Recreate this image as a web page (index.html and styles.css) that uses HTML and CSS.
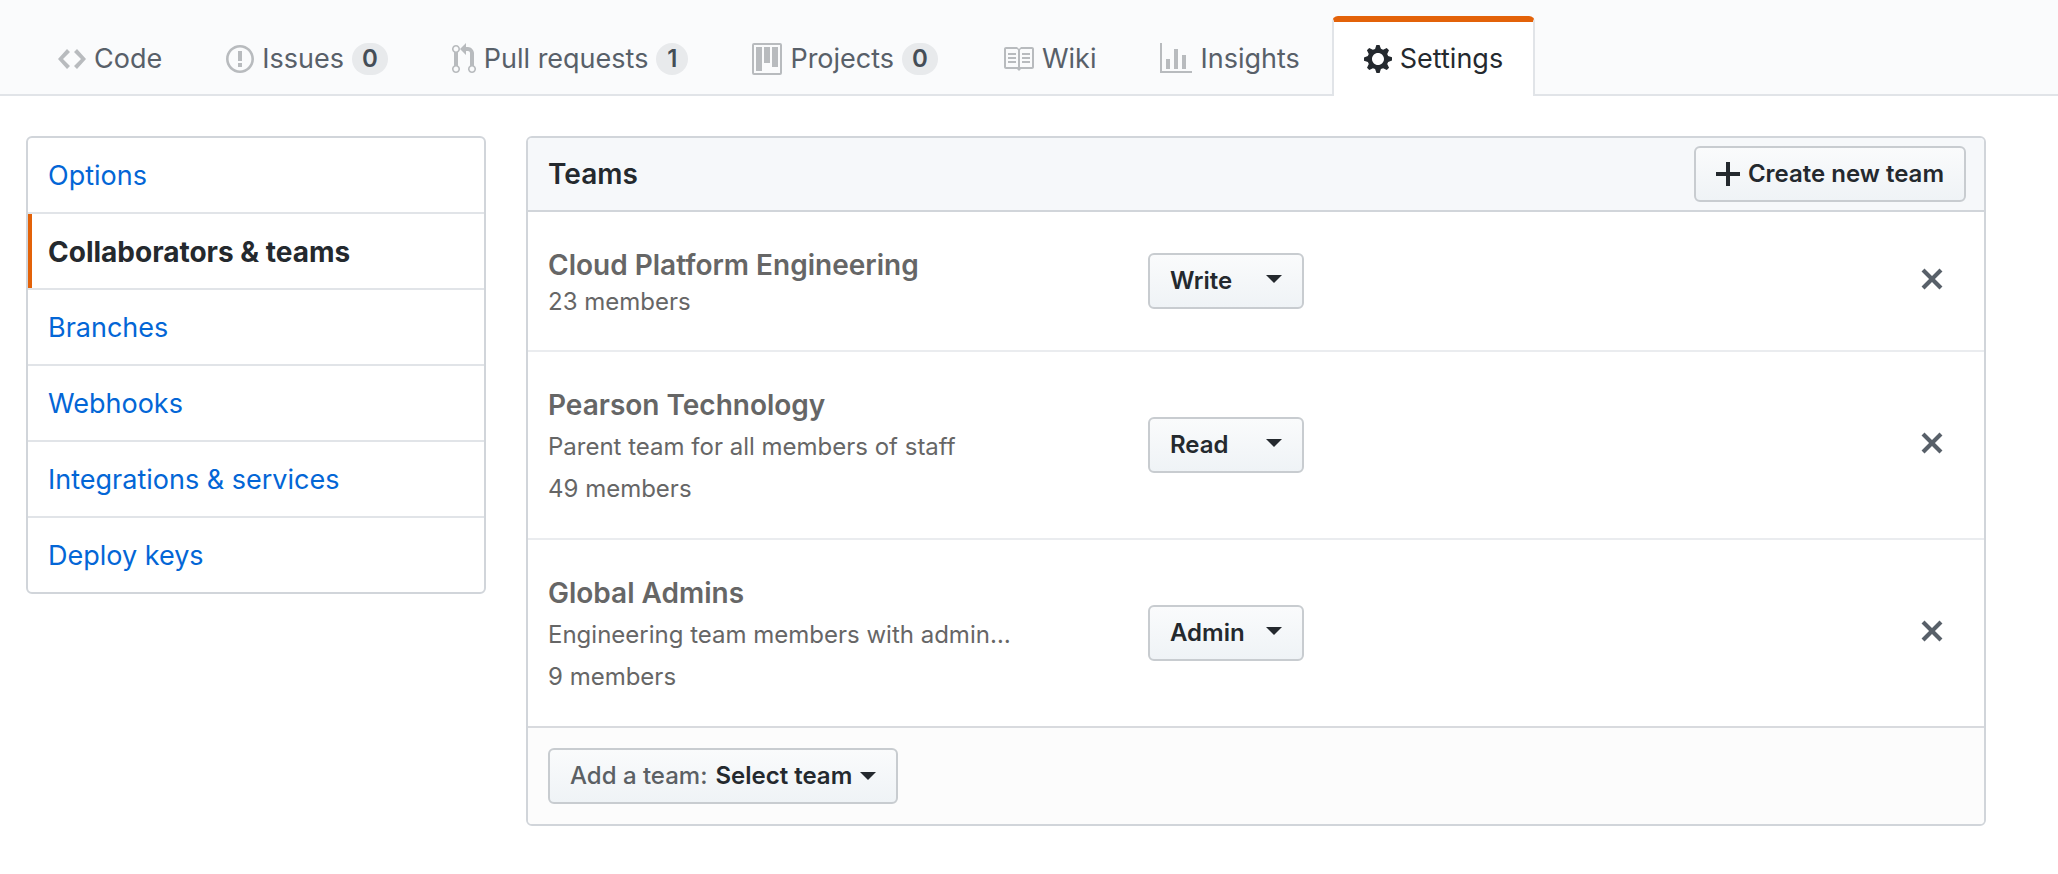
FILE: index.html
```html
<!DOCTYPE html>
<html lang="en">
<head>
<meta charset="utf-8">
<title>Collaborators &amp; teams</title>
<link rel="stylesheet" href="styles.css">
</head>
<body>
<header class="repo-head">
  <nav class="tabs" aria-label="Repository">
    <a class="tab" href="#code"><svg class="icon" width="28" height="32" viewBox="0 0 14 16"><path fill-rule="evenodd" d="M9.500 3L8 4.500 11.500 8 8 11.500 9.500 13 14 8 9.500 3zm-5 0L0 8l4.500 5L6 11.500 2.500 8 6 4.500 4.500 3z"/></svg><span>Code</span></a>
    <a class="tab" href="#issues"><svg class="icon" width="28" height="32" viewBox="0 0 14 16"><path fill-rule="evenodd" d="M7 2.300c3.140 0 5.700 2.560 5.700 5.700s-2.560 5.700-5.700 5.700A5.710 5.710 0 0 1 1.300 8c0-3.140 2.560-5.700 5.700-5.700zM7 1C3.140 1 0 4.140 0 8s3.140 7 7 7 7-3.140 7-7-3.140-7-7-7zm1 3H6v5h2V4zm0 6H6v2h2v-2z"/></svg><span>Issues</span><span class="count">0</span></a>
    <a class="tab" href="#pulls"><svg class="icon" width="24" height="32" viewBox="0 0 12 16"><path fill-rule="evenodd" d="M11 11.280V5c-.03-.78-.34-1.470-.94-2.060C9.460 2.350 8.780 2.030 8 2H7V0L4 3l3 3V4h1c.27.020.48.110.69.310.21.200.3.420.31.690v6.280A1.993 1.993 0 0 0 10 15a1.993 1.993 0 0 0 1-3.720zm-1 2.920c-.66 0-1.200-.55-1.200-1.200 0-.65.550-1.200 1.200-1.200.65 0 1.200.55 1.200 1.200 0 .65-.55 1.200-1.200 1.200zM4 3c0-1.110-.89-2-2-2a1.993 1.993 0 0 0-1 3.720v6.560A1.993 1.993 0 0 0 2 15a1.993 1.993 0 0 0 1-3.720V4.720c.59-.34 1-.98 1-1.720zm-.8 10c0 .66-.55 1.200-1.200 1.200-.65 0-1.200-.55-1.200-1.200 0-.65.550-1.200 1.200-1.200.65 0 1.200.55 1.200 1.200zM2 4.200C1.340 4.200.8 3.650.8 3c0-.65.550-1.200 1.200-1.200.65 0 1.200.55 1.200 1.200 0 .65-.55 1.200-1.200 1.200z"/></svg><span>Pull requests</span><span class="count">1</span></a>
    <a class="tab" href="#projects"><svg class="icon" width="30" height="32" viewBox="0 0 15 16"><path fill-rule="evenodd" d="M10 12h3V2h-3v10zm-4-2h3V2H6v8zm-4 4h3V2H2v12zm-1 1h13V1H1v14zM14 0H1a1 1 0 0 0-1 1v14a1 1 0 0 0 1 1h13a1 1 0 0 0 1-1V1a1 1 0 0 0-1-1z"/></svg><span>Projects</span><span class="count">0</span></a>
    <a class="tab" href="#wiki"><svg class="icon" width="32" height="32" viewBox="0 0 16 16"><path fill-rule="evenodd" d="M3 5h4v1H3V5zm0 3h4V7H3v1zm0 2h4V9H3v1zm11-5h-4v1h4V5zm0 2h-4v1h4V7zm0 2h-4v1h4V9zm2-6v9c0 .55-.45 1-1 1H9.500l-1 1-1-1H2c-.55 0-1-.45-1-1V3c0-.55.450-1 1-1h5.500l1 1 1-1H15c.55 0 1 .45 1 1zm-8 .5L7.500 3H2v9h6V3.500zm7-.5H9.500l-.5.500V12h6V3z"/></svg><span>Wiki</span></a>
    <a class="tab" href="#insights"><svg class="icon" width="32" height="32" viewBox="0 0 16 16"><path fill-rule="evenodd" d="M16 14v1H0V0h1v14h15zM5 13H3V8h2v5zm4 0H7V3h2v10zm4 0h-2V6h2v7z"/></svg><span>Insights</span></a>
    <a class="tab tab-active" href="#settings" aria-current="page"><svg class="icon" width="28" height="32" viewBox="0 0 14 16"><path fill-rule="evenodd" d="M14 8.770v-1.600l-1.940-.64-.45-1.090.88-1.840-1.130-1.130-1.810.91-1.090-.45-.69-1.920h-1.600l-.63 1.940-1.110.45-1.840-.88-1.130 1.130.91 1.810-.45 1.090L0 7.230v1.590l1.940.64.45 1.090-.88 1.840 1.130 1.130 1.810-.91 1.090.45.69 1.920h1.590l.63-1.940 1.110-.45 1.840.88 1.130-1.130-.92-1.810.47-1.090L14 8.750v.02zM7 11c-1.660 0-3-1.340-3-3s1.340-3 3-3 3 1.340 3 3-1.340 3-3 3z"/></svg><span>Settings</span></a>
  </nav>
</header>
<main class="layout">
  <nav class="menu" aria-label="Settings">
    <a class="menu-item" href="#options">Options</a>
    <a class="menu-item menu-item-active" href="#collaboration" aria-current="page">Collaborators &amp; teams</a>
    <a class="menu-item" href="#branches">Branches</a>
    <a class="menu-item" href="#hooks">Webhooks</a>
    <a class="menu-item" href="#integrations">Integrations &amp; services</a>
    <a class="menu-item" href="#keys">Deploy keys</a>
  </nav>
  <section class="panel" aria-labelledby="teams-title">
    <div class="panel-head">
      <h1 class="panel-title" id="teams-title">Teams</h1>
      <button class="btn" type="button"><svg class="plus" width="24" height="32" viewBox="0 0 12 16"><path d="M12 9H7v5H5V9H0V7h5V2h2v5h5z"/></svg>Create new team</button>
    </div>
    <ul class="teams">
      <li class="team">
        <div class="team-info">
          <h2 class="team-name">Cloud Platform Engineering</h2>
          <p class="team-text team-text-tight">23 members</p>
        </div>
        <div class="team-role">
          <select class="btn role" aria-label="Permission for Cloud Platform Engineering"><option>Admin</option><option selected>Write</option><option>Read</option></select>
          <svg class="caret role-caret" width="16" height="8" viewBox="0 0 16 8"><path d="M0 0h16L8 8z"/></svg>
        </div>
        <button class="remove" type="button" aria-label="Remove Cloud Platform Engineering"><svg width="24" height="32" viewBox="0 0 12 16"><path d="M7.480 8l3.750 3.750-1.480 1.480L6 9.480l-3.750 3.750-1.480-1.480L4.520 8 .77 4.250l1.480-1.480L6 6.520l3.750-3.750 1.480 1.480z"/></svg></button>
      </li>
      <li class="team">
        <div class="team-info">
          <h2 class="team-name">Pearson Technology</h2>
          <p class="team-text">Parent team for all members of staff</p>
          <p class="team-text">49 members</p>
        </div>
        <div class="team-role">
          <select class="btn role" aria-label="Permission for Pearson Technology"><option>Admin</option><option>Write</option><option selected>Read</option></select>
          <svg class="caret role-caret" width="16" height="8" viewBox="0 0 16 8"><path d="M0 0h16L8 8z"/></svg>
        </div>
        <button class="remove" type="button" aria-label="Remove Pearson Technology"><svg width="24" height="32" viewBox="0 0 12 16"><path d="M7.480 8l3.750 3.750-1.480 1.480L6 9.480l-3.750 3.750-1.480-1.480L4.520 8 .77 4.250l1.480-1.480L6 6.520l3.750-3.750 1.480 1.480z"/></svg></button>
      </li>
      <li class="team">
        <div class="team-info">
          <h2 class="team-name">Global Admins</h2>
          <p class="team-text">Engineering team members with admin…</p>
          <p class="team-text">9 members</p>
        </div>
        <div class="team-role">
          <select class="btn role" aria-label="Permission for Global Admins"><option selected>Admin</option><option>Write</option><option>Read</option></select>
          <svg class="caret role-caret" width="16" height="8" viewBox="0 0 16 8"><path d="M0 0h16L8 8z"/></svg>
        </div>
        <button class="remove" type="button" aria-label="Remove Global Admins"><svg width="24" height="32" viewBox="0 0 12 16"><path d="M7.480 8l3.750 3.750-1.480 1.480L6 9.480l-3.750 3.750-1.480-1.480L4.520 8 .77 4.250l1.480-1.480L6 6.520l3.750-3.750 1.480 1.480z"/></svg></button>
      </li>
    </ul>
    <div class="panel-foot">
      <button class="btn" type="button" aria-haspopup="menu"><span class="btn-label">Add a team:</span>Select team<svg class="caret" width="16" height="8" viewBox="0 0 16 8"><path d="M0 0h16L8 8z"/></svg></button>
    </div>
  </section>
</main>
</body>
</html>
```
FILE: styles.css
```css
* {
  box-sizing: border-box;
}

body {
  margin: 0;
  background: #fff;
  color: #24292e;
  font: 27px/42px Inter, "Liberation Sans", sans-serif;
}

h1, h2, p, ul {
  margin: 0;
  padding: 0;
}

a {
  text-decoration: none;
}

svg {
  display: block;
  flex: none;
  fill: currentColor;
}

.repo-head {
  padding: 16px 26px 0;
  background: #fafbfc;
  border-bottom: 2px solid #e1e4e8;
}

.tabs {
  display: flex;
  margin-bottom: -2px;
}

.tab {
  display: flex;
  align-items: center;
  gap: 8px;
  height: 80px;
  padding: 0 30px;
  border: 2px solid transparent;
  border-top: 6px solid transparent;
  border-bottom: 0;
  border-radius: 6px 6px 0 0;
  color: #586069;
  white-space: nowrap;
}

.tab .icon {
  color: #b8bbbe;
}

.tab-active {
  background: #fff;
  border-color: #e36209 #e1e4e8 transparent;
  color: #24292e;
}

.tab-active .icon {
  color: #24292e;
}

.count {
  min-width: 32px;
  padding: 0 10px;
  border-radius: 16px;
  background: #e8eaec;
  color: #444d56;
  font-size: 24px;
  font-weight: 600;
  line-height: 32px;
  text-align: center;
}

.layout {
  display: grid;
  grid-template-columns: 460px minmax(0, 1fr);
  align-items: start;
  gap: 40px;
  padding: 40px 72px 40px 26px;
}

.menu {
  overflow: hidden;
  border: 2px solid #d1d5da;
  border-radius: 6px;
}

.menu-item {
  display: block;
  padding: 17px 20px 15px;
  border-bottom: 2px solid #e1e4e8;
  color: #0366d6;
}

.menu-item:last-child {
  border-bottom: 0;
}

.menu-item-active {
  padding-left: 16px;
  background: linear-gradient(#e36209, #e36209) left / 4px 100% no-repeat;
  padding-left: 20px;
  color: #24292e;
  font-size: 28px;
  font-weight: 700;
}

.panel {
  overflow: hidden;
  border: 2px solid #d1d5da;
  border-radius: 6px;
}

.panel-head {
  display: flex;
  align-items: center;
  justify-content: space-between;
  padding: 8px 18px 8px 20px;
  background: #f6f8fa;
  border-bottom: 2px solid #d1d5da;
}

.panel-title,
.team-name {
  font-size: 28px;
  font-weight: 600;
  line-height: 42px;
}

.btn {
  display: flex;
  align-items: center;
  height: 56px;
  margin: 0;
  padding: 0 20px;
  border: 2px solid #c8ccd0;
  border-radius: 6px;
  background: linear-gradient(#fafbfc, #eff3f6);
  color: #24292e;
  font: 600 24px/36px Inter, "Liberation Sans", sans-serif;
  cursor: pointer;
}

.plus {
  margin-right: 8px;
}

.btn .caret {
  margin-left: 8px;
}

.btn-label {
  margin-right: 8px;
  color: #5b6064;
  font-weight: 500;
}

.teams {
  list-style: none;
}

.team {
  display: grid;
  grid-template-columns: 600px 1fr auto;
  align-items: center;
  padding: 28px 40px 28px 20px;
  border-bottom: 2px solid #eaecef;
}

.team:last-child {
  border-bottom-color: #d8dade;
}

.team-info {
  padding-top: 4px;
  color: #666;
}

.team-text {
  font-size: 24px;
  line-height: 42px;
}

.team-text-tight {
  margin-bottom: 4px;
  line-height: 32px;
}

.team-role {
  position: relative;
  width: 156px;
}

.role {
  width: 100%;
  appearance: none;
}

.role-caret {
  position: absolute;
  top: 22px;
  right: 22px;
  pointer-events: none;
}

.remove {
  margin-bottom: 4px;
  padding: 0;
  border: 0;
  background: none;
  color: #586069;
  cursor: pointer;
}

.panel-foot {
  display: flex;
  padding: 20px;
  background: #fcfcfc;
}
```
